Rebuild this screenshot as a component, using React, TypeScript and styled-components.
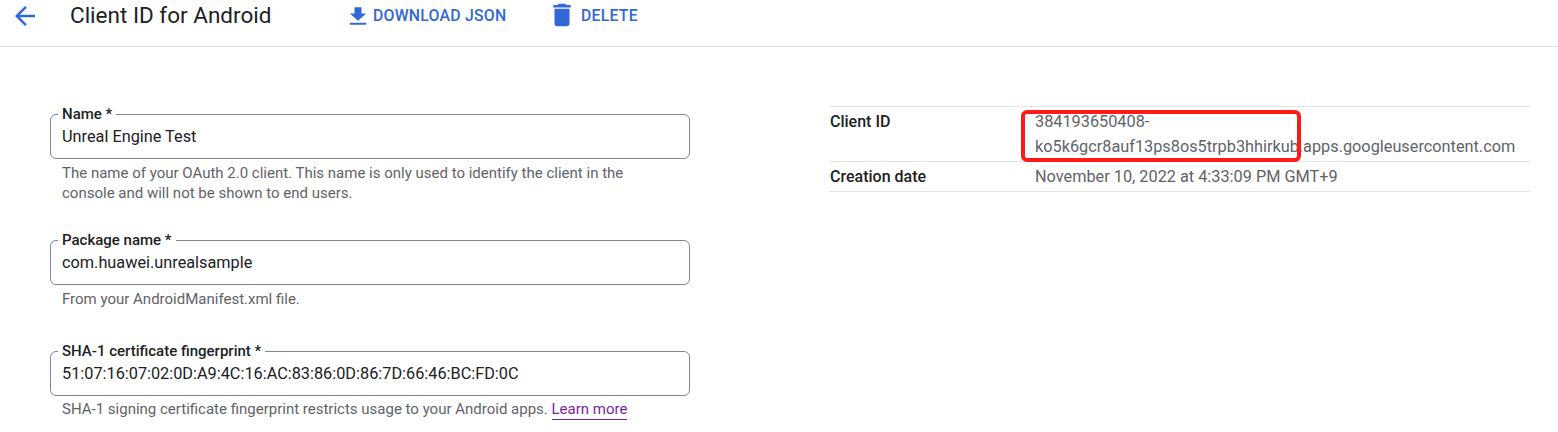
import styled, { createGlobalStyle } from "styled-components";

const GlobalStyle = createGlobalStyle`
  html, body {
    margin: 0;
    padding: 0;
    background: #fff;
    font-family: Roboto, "Liberation Sans", sans-serif;
  }
  body {
    height: 432px;
    overflow: hidden;
  }
`;

const Page = styled.div`
  width: 1558px;
  height: 432px;
  overflow: hidden;
`;

const Toolbar = styled.header`
  height: 47px;
  box-sizing: border-box;
  border-bottom: 1px solid #e3e4e6;
  display: flex;
  align-items: flex-start;
  padding-left: 10px;
`;

const BackIcon = styled.svg`
  width: 30px;
  height: 30px;
  margin-top: 1px;
  fill: #3367d6;
  flex: none;
`;

const Title = styled.h1`
  margin: 2px 0 0 30px;
  width: 274px;
  flex: none;
  font-size: 22.5px;
  font-weight: 400;
  line-height: 26px;
  color: #202124;
`;

const ActionButton = styled.button<{ $width: number; $gap: number }>`
  width: ${(p) => p.$width}px;
  height: 30px;
  padding: 0;
  border: 0;
  background: none;
  display: flex;
  align-items: center;
  gap: ${(p) => p.$gap}px;
  flex: none;
  font-family: inherit;
  font-size: 15.8px;
  font-weight: 500;
  letter-spacing: 0.25px;
  color: #3367d6;
  white-space: nowrap;
`;

const DownloadIcon = styled.svg`
  width: 28px;
  height: 25px;
  margin-top: 3px;
  fill: #3367d6;
  flex: none;
`;

const TrashIcon = styled.svg`
  width: 30px;
  height: 30px;
  fill: #3367d6;
  flex: none;
`;

const Content = styled.main`
  display: grid;
  grid-template-columns: 640px 700px;
  column-gap: 140px;
  padding: 59px 0 0 50px;
  align-items: start;
`;

const Form = styled.div`
  display: flex;
  flex-direction: column;
`;

const FieldBlock = styled.div<{ $height: number }>`
  height: ${(p) => p.$height}px;
  padding-top: 8px;
  box-sizing: border-box;
`;

const FieldBox = styled.div`
  position: relative;
  height: 45px;
  box-sizing: border-box;
  border: 1px solid #80868b;
  border-radius: 6px;
  padding: 13px 11px 0;
  font-size: 16.3px;
  line-height: 18px;
  color: #202124;
`;

const FieldLabel = styled.label`
  position: absolute;
  top: -9px;
  left: 7px;
  padding: 0 4px;
  background: #fff;
  font-size: 15px;
  font-weight: 500;
  line-height: 16px;
  color: #202124;
`;

const Hint = styled.p<{ $top?: number }>`
  margin: ${(p) => p.$top ?? 4}px 0 0;
  padding: 0 40px 0 12px;
  font-size: 15px;
  line-height: 20px;
  color: #5f6368;
`;

const LearnMore = styled.a`
  color: #7b1fa2;
  border-bottom: 1px solid #7b1fa2;
  padding-bottom: 1px;
`;

const Details = styled.dl`
  position: relative;
  margin: 0;
  border-top: 1px solid #e3e4e6;
`;

const DetailRow = styled.div`
  display: grid;
  grid-template-columns: 205px 1fr;
  border-bottom: 1px solid #e3e4e6;
  padding: 3px 0 2px;
  font-size: 16px;
  line-height: 24.5px;

  & + & {
    padding-bottom: 1.5px;
  }
`;

const DetailName = styled.dt`
  font-weight: 500;
  color: #202124;
`;

const DetailValue = styled.dd`
  margin: 0;
  width: 490px;
  font-size: 16.3px;
  color: #5f6368;
  word-break: break-word;
`;

const Highlight = styled.div`
  position: absolute;
  left: 191px;
  top: 3px;
  width: 280px;
  height: 52px;
  box-sizing: border-box;
  border: 4px solid #ff1a1a;
  border-radius: 6px;
  pointer-events: none;
`;

export default function App() {
  return (
    <Page>
      <GlobalStyle />
      <Toolbar>
        <BackIcon viewBox="0 0 24 24">
          <path d="M20 11H7.83l5.59-5.59L12 4l-8 8 8 8 1.41-1.41L7.83 13H20v-2z" />
        </BackIcon>
        <Title>Client ID for Android</Title>
        <ActionButton $width={203} $gap={1}>
          <DownloadIcon viewBox="0 0 24 24" preserveAspectRatio="none">
            <path d="M19 9h-4V3H9v6H5l7 7 7-7zM5 18v2h14v-2H5z" />
          </DownloadIcon>
          DOWNLOAD JSON
        </ActionButton>
        <ActionButton $width={100} $gap={4}>
          <TrashIcon viewBox="0 0 24 24">
            <path d="M6 19c0 1.1.9 2 2 2h8c1.1 0 2-.9 2-2V7H6v12zM19 4h-3.5l-1-1h-5l-1 1H5v2h14V4z" />
          </TrashIcon>
          DELETE
        </ActionButton>
      </Toolbar>
      <Content>
        <Form>
          <FieldBlock $height={126}>
            <FieldBox>
              <FieldLabel>Name *</FieldLabel>
              Unreal Engine Test
            </FieldBox>
            <Hint>
              The name of your OAuth 2.0 client. This name is only used to identify the client in the console and will
              not be shown to end users.
            </Hint>
          </FieldBlock>
          <FieldBlock $height={111}>
            <FieldBox>
              <FieldLabel>Package name *</FieldLabel>
              com.huawei.unrealsample
            </FieldBox>
            <Hint>From your AndroidManifest.xml file.</Hint>
          </FieldBlock>
          <FieldBlock $height={90}>
            <FieldBox>
              <FieldLabel>SHA-1 certificate fingerprint *</FieldLabel>
              51:07:16:07:02:0D:A9:4C:16:AC:83:86:0D:86:7D:66:46:BC:FD:0C
            </FieldBox>
            <Hint $top={3}>
              SHA-1 signing certificate fingerprint restricts usage to your Android apps.{" "}
              <LearnMore>Learn more</LearnMore>
            </Hint>
          </FieldBlock>
        </Form>
        <Details>
          <DetailRow>
            <DetailName>Client ID</DetailName>
            <DetailValue>384193650408-ko5k6gcr8auf13ps8os5trpb3hhirkub.apps.googleusercontent.com</DetailValue>
          </DetailRow>
          <DetailRow>
            <DetailName>Creation date</DetailName>
            <DetailValue>November 10, 2022 at 4:33:09 PM GMT+9</DetailValue>
          </DetailRow>
          <Highlight />
        </Details>
      </Content>
    </Page>
  );
}
